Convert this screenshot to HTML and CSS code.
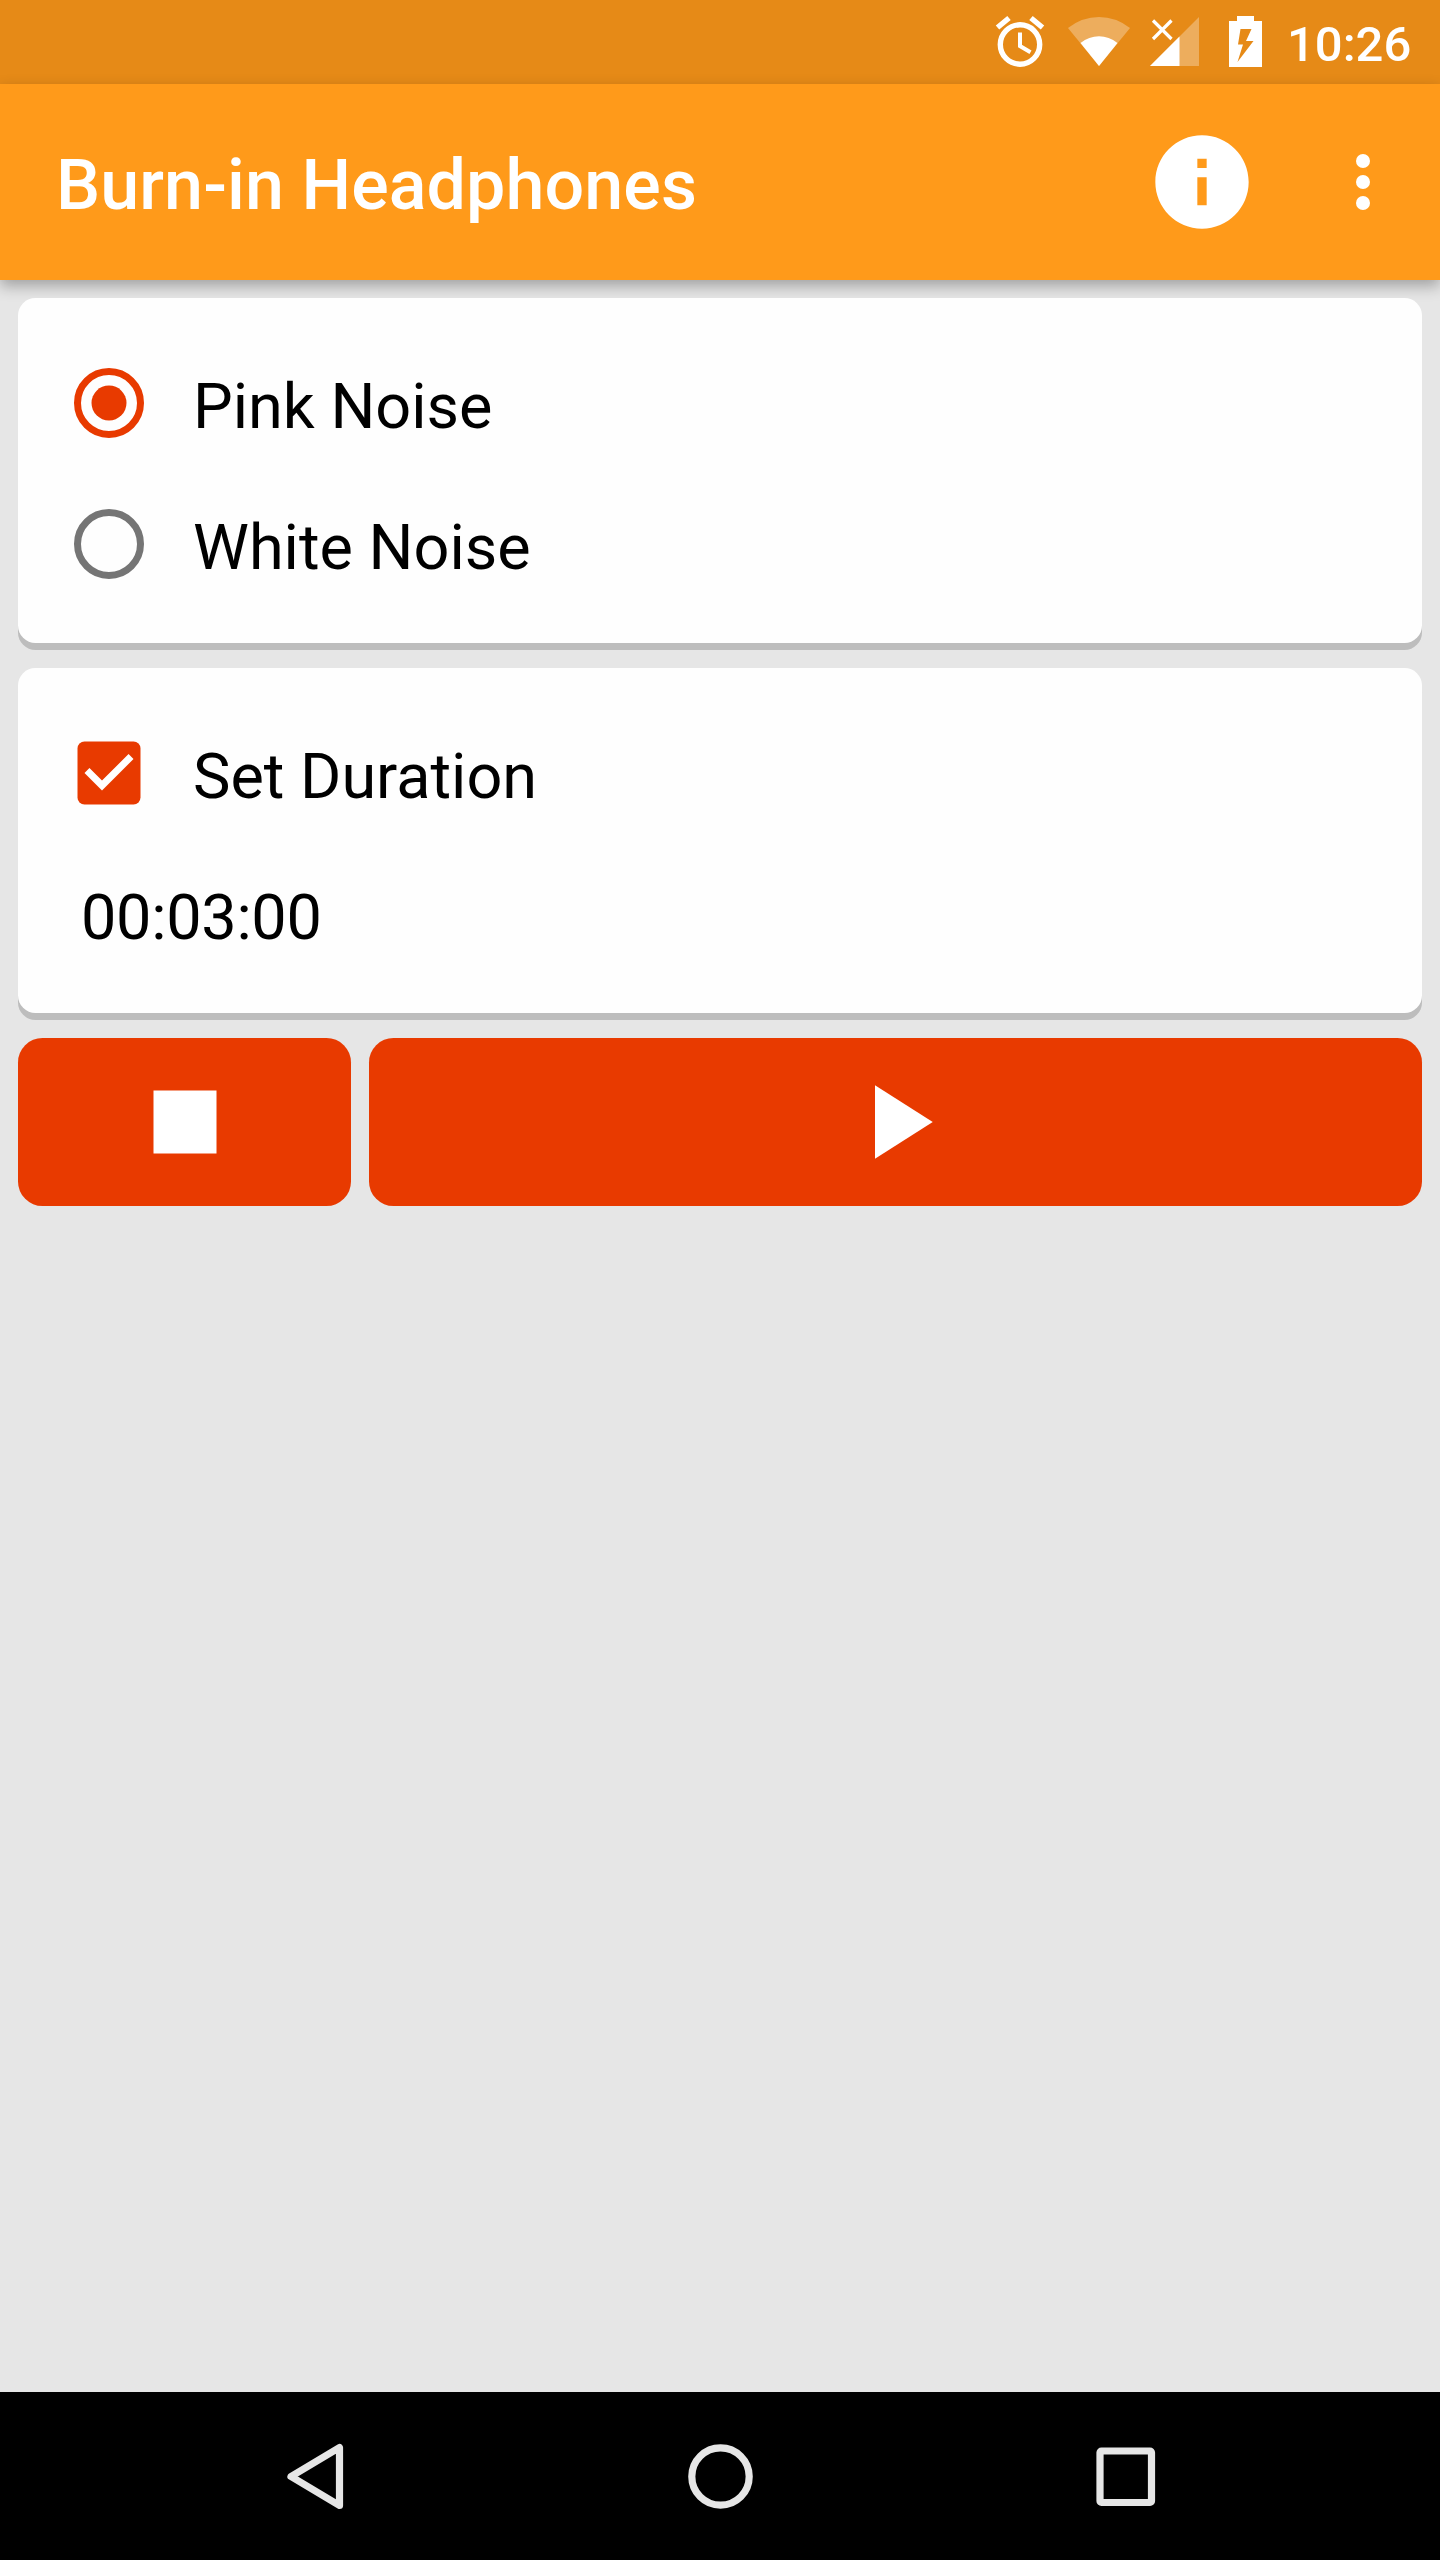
FILE: index.html
```html
<!DOCTYPE html>
<html lang="en">
<head>
<meta charset="utf-8">
<title>Burn-in Headphones</title>
<link rel="stylesheet" href="styles.css">
</head>
<body>
<div class="screen">
  <div class="status-bar">
    <svg class="alarm" viewBox="0 0 60 60"><circle cx="30" cy="32.500" r="19.700"/><path d="M30 20.500V34L40.500 40.300"/><path class="bell" d="M7.500 15.500L19 6M52.500 15.500L41 6"/></svg>
    <svg class="wifi" viewBox="0 0 62 84"><path class="dim" d="M31 66L0 28Q14 17 31 17T62 28Z"/><path d="M31 66L12.500 43Q21 36.300 31 36.300T49.500 43Z"/></svg>
    <svg class="signal" viewBox="0 0 49 84"><path class="dim" d="M0 66L49 17V66Z"/><path d="M0 66L29.500 36.500V66Z"/><path class="cross" d="M3 20.500L21.500 39M21.500 20.500L3 39"/></svg>
    <svg class="battery" viewBox="0 0 33 84"><path fill-rule="evenodd" d="M8 16H25V21H33V67H0V21H8ZM11.500 29L9 44.500H14L8.500 62L24.500 41H17L22.500 29Z"/></svg>
    <span class="clock">10:26</span>
  </div>
  <header class="app-bar">
    <h1 class="title">Burn-in Headphones</h1>
    <svg class="info" viewBox="0 0 24 24"><path d="M12 2C6.480 2 2 6.480 2 12s4.480 10 10 10 10-4.480 10-10S17.520 2 12 2zm1 15h-2v-6h2v6zm0-8h-2V7h2v2z"/></svg>
    <svg class="more" viewBox="0 0 14 56"><circle cx="7" cy="7" r="7"/><circle cx="7" cy="28" r="7"/><circle cx="7" cy="49" r="7"/></svg>
  </header>
  <main class="content">
    <section class="card">
      <div class="option">
        <svg class="control" viewBox="0 0 84 84"><circle class="ring checked" cx="42" cy="42" r="31.500"/><circle class="accent" cx="42" cy="42" r="17.500"/></svg>
        <span class="label">Pink Noise</span>
      </div>
      <div class="option">
        <svg class="control" viewBox="0 0 84 84"><circle class="ring" cx="42" cy="42" r="31.500"/></svg>
        <span class="label">White Noise</span>
      </div>
    </section>
    <section class="card">
      <div class="option">
        <svg class="control" viewBox="0 0 24 24"><rect class="accent" x="3" y="3" width="18" height="18" rx="2"/><path class="tick" d="M10 17l-5-5 1.410-1.410L10 14.170l7.590-7.590L19 8z"/></svg>
        <span class="label">Set Duration</span>
      </div>
      <div class="option duration"><span class="label">00:03:00</span></div>
    </section>
    <div class="actions">
      <button class="button stop" aria-label="Stop"><svg viewBox="0 0 24 24"><path d="M6 6h12v12H6z"/></svg></button>
      <button class="button play" aria-label="Play"><svg viewBox="0 0 24 24"><path d="M8 5v14l11-7z"/></svg></button>
    </div>
  </main>
  <nav class="nav-bar">
    <svg viewBox="0 0 84 84"><path d="M18 42.500L66.500 13.500V71.500Z"/></svg>
    <svg viewBox="0 0 84 84"><circle cx="42.500" cy="42.500" r="28.700"/></svg>
    <svg viewBox="0 0 84 84"><rect x="17" y="17" width="51.500" height="51.500" rx="1.500"/></svg>
  </nav>
</div>
</body>
</html>
```

FILE: styles.css
```css
* {
  box-sizing: border-box;
}

body {
  margin: 0;
  font-family: Roboto, sans-serif;
  background: #e6e6e6;
}

.screen {
  display: flex;
  flex-direction: column;
  width: 1440px;
  height: 2560px;
}

svg {
  display: block;
  flex: none;
  fill: #fff;
}

.status-bar {
  display: flex;
  align-items: center;
  justify-content: flex-end;
  height: 84px;
  padding-right: 28px;
  background: #e68a17;
}

.status-bar svg {
  height: 84px;
}

.status-bar .alarm {
  width: 60px;
  height: 60px;
  margin-right: 18px;
  fill: none;
  stroke: #fff;
  stroke-width: 5.4;
}

.alarm path {
  stroke-width: 4;
}

.alarm .bell {
  stroke-width: 5.4;
}

.wifi {
  width: 62px;
  margin-right: 20px;
}

.signal {
  width: 49px;
  margin-right: 30px;
}

.battery {
  width: 33px;
  margin-right: 25px;
}

.dim {
  fill-opacity: 0.3;
}

.cross {
  stroke: #fff;
  stroke-width: 3.2;
}

.clock {
  width: 125px;
  padding-top: 4px;
  font-size: 49px;
  font-weight: 500;
  color: #fff;
}

.app-bar {
  position: relative;
  display: flex;
  align-items: center;
  height: 196px;
  padding: 0 70px 0 56px;
  background: #ff9a1a;
  box-shadow: 0 6px 14px rgba(0, 0, 0, 0.3);
}

.title {
  flex: 1;
  margin: 0;
  padding-top: 6px;
  font-size: 70px;
  font-weight: 500;
  letter-spacing: 0.08px;
  color: #fff;
}

.info {
  width: 112px;
  height: 112px;
  margin-right: 98px;
}

.more {
  width: 14px;
  height: 56px;
}

.content {
  display: flex;
  flex: 1;
  flex-direction: column;
  gap: 25px;
  padding: 18px;
}

.card {
  position: relative;
  height: 345px;
  padding: 34px 49px 0;
  border-radius: 17.5px;
  background: #fefefe;
  box-shadow: 0 7px 0 #bdbdbd;
}

.option {
  display: flex;
  align-items: center;
  gap: 42px;
  height: 141px;
}

.control {
  width: 84px;
  height: 84px;
}

.label {
  padding-top: 8px;
  font-size: 63px;
  color: #000;
}

.duration {
  padding-left: 14px;
  letter-spacing: -0.3px;
}

.ring {
  fill: none;
  stroke: #757575;
  stroke-width: 7;
}

.ring.checked {
  stroke: #e83a00;
}

.accent {
  fill: #e83a00;
}

.tick {
  fill: #fff;
}

.actions {
  display: flex;
  gap: 18px;
}

.button {
  display: flex;
  align-items: center;
  justify-content: center;
  height: 168px;
  padding: 0;
  border: 0;
  border-radius: 24.5px;
  background: #e83a00;
}

.button svg {
  width: 126px;
  height: 126px;
}

.stop {
  width: 333px;
}

.play {
  flex: 1;
}

.nav-bar {
  display: flex;
  align-items: center;
  justify-content: center;
  gap: 321px;
  height: 168px;
  background: #000;
}

.nav-bar svg {
  width: 84px;
  height: 84px;
  fill: none;
  stroke: #e6e6e6;
  stroke-width: 7.2;
  stroke-linejoin: round;
}
```
